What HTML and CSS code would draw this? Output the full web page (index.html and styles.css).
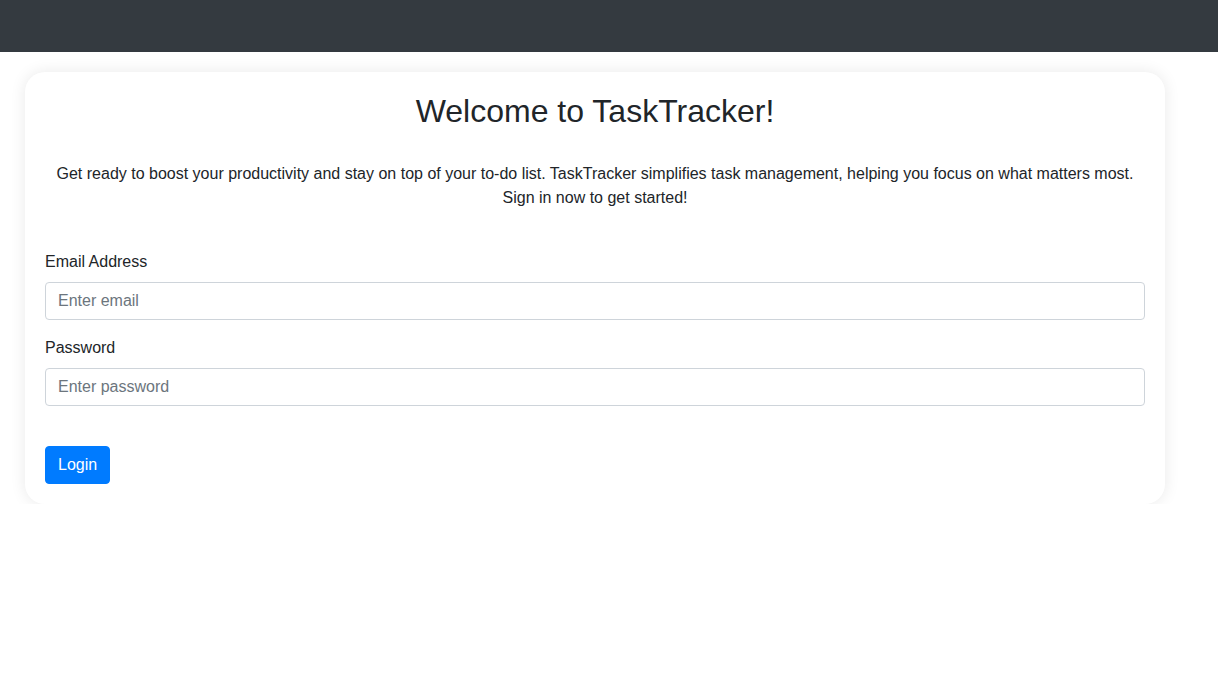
FILE: index.html
```html
<!DOCTYPE html>
<html lang="en">
<head>
<meta charset="utf-8">
<title>TaskTracker</title>
<link rel="stylesheet" href="styles.css">
</head>
<body>
<nav class="navbar"></nav>
<main class="page">
  <section class="card">
    <h2 class="title">Welcome to TaskTracker!</h2>
    <p class="intro">Get ready to boost your productivity and stay on top of your to-do list. TaskTracker simplifies task management, helping you focus on what matters most. Sign in now to get started!</p>
    <form class="form">
      <div class="group">
        <label class="label" for="email">Email Address</label>
        <input class="control" id="email" type="email" placeholder="Enter email">
      </div>
      <div class="group">
        <label class="label" for="password">Password</label>
        <input class="control" id="password" type="password" placeholder="Enter password">
      </div>
      <button class="btn" type="button">Login</button>
    </form>
  </section>
</main>
</body>
</html>
```
FILE: styles.css
```css
* { box-sizing: border-box; }
html, body {
  margin: 0;
  padding: 0;
  background: #fff;
  font-family: "Liberation Sans", Arial, sans-serif;
  font-size: 16px;
  line-height: 1.5;
  color: #212529;
}
.navbar {
  height: 52px;
  background: #343a40;
}
.page {
  padding: 20px 0 0 25px;
}
.card {
  width: 1140px;
  background: #fff;
  border-radius: 20px;
  box-shadow: 0 0 16px rgba(0, 0, 0, 0.09);
  padding: 20px;
}
.title {
  margin: 0 0 32px;
  font-size: 32px;
  font-weight: 400;
  line-height: 1.2;
  text-align: center;
}
.intro {
  margin: 0 0 40px;
  text-align: center;
}
.form { margin: 0; }
.group { margin-bottom: 16px; }
.label {
  display: block;
  margin-bottom: 8px;
}
.control {
  display: block;
  width: 100%;
  height: 38px;
  padding: 6px 12px;
  font-family: inherit;
  font-size: 16px;
  line-height: 1.5;
  color: #495057;
  background: #fff;
  border: 1px solid #ced4da;
  border-radius: 4px;
  outline: none;
}
.control::placeholder { color: #6c757d; opacity: 1; }
.btn {
  margin-top: 40px;
  display: block;
  padding: 6px 12px;
  font-family: inherit;
  font-size: 16px;
  line-height: 1.5;
  color: #fff;
  background: #007bff;
  border: 1px solid #007bff;
  border-radius: 4px;
  cursor: pointer;
}
```
